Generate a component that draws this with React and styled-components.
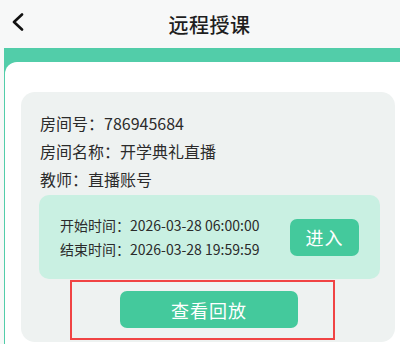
import styled, { createGlobalStyle } from "styled-components";

const GlobalStyle = createGlobalStyle`
  html, body {
    margin: 0;
    padding: 0;
    background: #f7f8f8;
    font-family: "Noto Sans CJK SC", "Noto Sans", sans-serif;
  }
`;

export default function App() {
  return (
    <Page>
      <GlobalStyle />
      <Header>
        <BackButton aria-label="返回">
          <svg width="14" height="18" viewBox="0 0 14 18" fill="none">
            <path d="M11 1.5 L3 9 L11 16.5" stroke="#111" strokeWidth="2.6" strokeLinecap="round" strokeLinejoin="round" />
          </svg>
        </BackButton>
        <Title>远程授课</Title>
      </Header>
      <Band>
        <Card>
          <RoomPanel>
            <InfoLine>房间号：786945684</InfoLine>
            <InfoLine>房间名称：开学典礼直播</InfoLine>
            <InfoLine>教师：直播账号</InfoLine>
            <TimePanel>
              <TimeList>
                <TimeLine>开始时间：2026-03-28 06:00:00</TimeLine>
                <TimeLine>结束时间：2026-03-28 19:59:59</TimeLine>
              </TimeList>
              <GreenButton $w={69} $h={37}>进入</GreenButton>
            </TimePanel>
            <Highlight>
              <GreenButton $w={178} $h={37}>查看回放</GreenButton>
            </Highlight>
          </RoomPanel>
        </Card>
      </Band>
    </Page>
  );
}

const Page = styled.div`
  width: 400px;
  height: 344px;
  overflow: hidden;
  background: #f7f8f8;
`;

const Header = styled.div`
  position: relative;
  height: 48px;
  display: flex;
  align-items: center;
  justify-content: center;
  padding-left: 19px;
  box-sizing: border-box;
`;

const BackButton = styled.div`
  position: absolute;
  left: 11px;
  top: 13px;
  display: flex;
`;

const Title = styled.h1`
  margin: 0;
  font-size: 20px;
  font-weight: 500;
  color: #1e1e1e;
  letter-spacing: 0.5px;
`;

const Band = styled.div`
  margin-left: 3.5px;
  padding-top: 14px;
  padding-left: 1.5px;
  background: #52cda9;
  height: 300px;
`;

const Card = styled.div`
  background: #ffffff;
  border-top-left-radius: 12px;
  height: 100%;
  padding: 30px 0 0 16px;
  box-sizing: border-box;
`;

const RoomPanel = styled.div`
  width: 374px;
  height: 250px;
  background: #eef2f1;
  border-radius: 14px;
  padding: 17px 0 0 19px;
  box-sizing: border-box;
`;

const InfoLine = styled.div`
  font-size: 16px;
  line-height: 28px;
  color: #2b2b2b;
`;

const TimePanel = styled.div`
  margin: 2px 0 0 -1px;
  width: 341px;
  height: 84px;
  background: #c9f0e2;
  border-radius: 10px;
  display: flex;
  align-items: center;
  justify-content: space-between;
  padding: 0 21px;
  box-sizing: border-box;
`;

const TimeList = styled.div`
  display: flex;
  flex-direction: column;
`;

const TimeLine = styled.div`
  font-size: 14px;
  line-height: 24px;
  color: #2b2b2b;
`;

const GreenButton = styled.div`
  width: ${(p) => p.$w}px;
  height: ${(p) => p.$h}px;
  border-radius: 7px;
  background: #44c99c;
  color: #ffffff;
  font-size: 18px;
  display: flex;
  align-items: center;
  justify-content: center;
  letter-spacing: 1px;
`;

const Highlight = styled.div`
  margin: 1px 0 0 30px;
  width: 265px;
  height: 60px;
  border: 2px solid #f04444;
  box-sizing: border-box;
  padding: 9px 0 0 48px;
`;
